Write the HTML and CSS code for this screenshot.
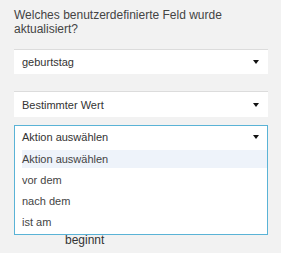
FILE: index.html
```html
<!DOCTYPE html>
<html>
<head>
<meta charset="utf-8">
<link rel="stylesheet" href="styles.css">
</head>
<body>
<div class="form">
  <div class="question">Welches benutzerdefinierte Feld wurde aktualisiert?</div>
  <div class="select plain first">
    <span class="value">geburtstag</span><span class="caret"></span>
  </div>
  <div class="select plain second">
    <span class="value">Bestimmter Wert</span><span class="caret"></span>
  </div>
  <div class="open-wrap">
    <div class="select-open">
      <div class="select-head">
        <span class="value">Aktion auswählen</span><span class="caret"></span>
      </div>
      <ul class="options">
        <li class="option active">Aktion auswählen</li>
        <li class="option">vor dem</li>
        <li class="option">nach dem</li>
        <li class="option">ist am</li>
      </ul>
    </div>
    <div class="row-behind">
      <span class="spacer"></span>
      <span class="suffix">beginnt</span>
    </div>
  </div>
</div>
</body>
</html>
```

FILE: styles.css
```css
html, body {
  margin: 0;
  padding: 0;
  background: #f2f2f2;
}
body {
  font-family: "Liberation Sans", Arial, sans-serif;
  color: #444;
}
.form {
  display: flex;
  flex-direction: column;
  padding: 8px 13px 0 14px;
}
.question {
  font-size: 12px;
  line-height: 14px;
  color: #444;
  padding-right: 40px;
}
.select {
  display: flex;
  align-items: center;
  justify-content: space-between;
  box-sizing: border-box;
  height: 25px;
  background: #fff;
  border-top: 1px solid #dcdcdc;
  padding: 0 9px 0 8px;
  font-size: 11px;
  color: #333;
}
.select.first {
  margin-top: 13px;
}
.select.second {
  margin-top: 17px;
  height: 26px;
}
.caret {
  width: 0;
  height: 0;
  border-left: 3.5px solid transparent;
  border-right: 3.5px solid transparent;
  border-top: 4px solid #111;
}
.open-wrap {
  position: relative;
  margin-top: 8px;
}
.select-open {
  position: absolute;
  left: 0;
  right: 0;
  top: 0;
  z-index: 2;
  background: #fff;
  border: 1px solid #5ab3d6;
}
.select-head {
  display: flex;
  align-items: center;
  justify-content: space-between;
  height: 22px;
  padding: 0 8px 0 7px;
  font-size: 11px;
  color: #333;
}
.options {
  list-style: none;
  margin: 0;
  padding: 2px 0 0 0;
}
.option {
  height: 18px;
  line-height: 18px;
  margin: 0 0 3px 7px;
  font-size: 11px;
  color: #444;
}
.option.active {
  background: #eef3fa;
}
.row-behind {
  display: flex;
  align-items: center;
  padding-top: 108px;
  font-size: 12px;
  color: #333;
}
.spacer {
  width: 51px;
}
```
